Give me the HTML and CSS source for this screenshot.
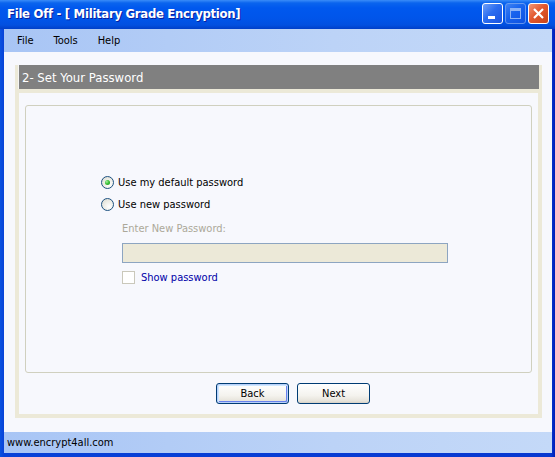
FILE: index.html
```html
<!DOCTYPE html>
<html lang="en">
<head>
    <meta charset="UTF-8">
    <title>File Off - [ Military Grade Encryption]</title>
    <link rel="stylesheet" href="styles.css">
</head>
<body>
    <div class="window">
        <div class="titlebar">
            <span class="title">File Off - [ Military Grade Encryption]</span>
            <div class="title-buttons">
                <span class="tbtn minimize"><i></i></span>
                <span class="tbtn maximize"><i></i></span>
                <span class="tbtn close">
                    <svg width="13" height="13" viewBox="0 0 13 13">
                        <path d="M2 2 L11 11 M11 2 L2 11" stroke="#fff" stroke-width="2.2" fill="none"/>
                    </svg>
                </span>
            </div>
        </div>

        <div class="menubar">
            <span class="menu-item">File</span>
            <span class="menu-item">Tools</span>
            <span class="menu-item">Help</span>
        </div>

        <div class="client">
            <div class="frame">
                <div class="step-header">2- Set Your Password</div>
                <div class="panel">
                    <div class="groupbox">
                        <label class="option">
                            <span class="radio checked"></span>
                            <span>Use my default password</span>
                        </label>
                        <label class="option">
                            <span class="radio"></span>
                            <span>Use new password</span>
                        </label>

                        <div class="new-password">
                            <div class="field-label">Enter New Password:</div>
                            <div class="textbox"></div>
                            <label class="show-password">
                                <span class="checkbox"></span>
                                <span>Show password</span>
                            </label>
                        </div>
                    </div>

                    <div class="actions">
                        <button class="xp-button default">Back</button>
                        <button class="xp-button">Next</button>
                    </div>
                </div>
            </div>
        </div>

        <div class="statusbar">www.encrypt4all.com</div>
    </div>
</body>
</html>
```

FILE: styles.css
```css
body {
    margin: 0;
    padding: 0;
    font-family: "DejaVu Sans Condensed", "DejaVu Sans", sans-serif;
    font-size: 11px;
    color: #000;
}
.window {
    width: 555px;
    height: 457px;
    display: flex;
    flex-direction: column;
    background: linear-gradient(to right, #0A52E0 0, #0842D8 4px, #0838D0 551px, #001DB8 555px);
    overflow: hidden;
}
.titlebar {
    height: 29px;
    flex: none;
    display: flex;
    align-items: center;
    justify-content: space-between;
    padding: 0 6px 0 7px;
    background: linear-gradient(to bottom, #3A8CF8 0, #0A64EE 3px, #0058EE 8px, #0055EA 18px, #0250E0 25px, #003FC8 29px);
}
.title {
    color: #fff;
    font-weight: bold;
    font-size: 13px;
    letter-spacing: -0.3px;
    padding-bottom: 3px;
    text-shadow: 1px 1px 0 #0A1E9E;
}
.title-buttons {
    display: flex;
    gap: 2px;
    padding-bottom: 3px;
}
.tbtn {
    width: 19px;
    height: 19px;
    border: 1px solid #fff;
    border-radius: 3px;
    position: relative;
    display: flex;
    align-items: center;
    justify-content: center;
    background: linear-gradient(135deg, #6FA0F8 0, #2B6DF0 45%, #1A53E0 100%);
}
.minimize i {
    position: absolute;
    left: 5px;
    bottom: 4px;
    width: 7px;
    height: 3px;
    background: #fff;
}
.maximize {
    opacity: 0.55;
    border-color: #B8CCF5;
}
.maximize i {
    width: 9px;
    height: 7px;
    border: 1px solid #fff;
    border-top-width: 3px;
    margin-top: 1px;
}
.close {
    background: linear-gradient(135deg, #F29676 0, #E2582F 45%, #C84418 100%);
}
.menubar {
    height: 23px;
    flex: none;
    margin: 0 3px 0 4px;
    padding-left: 3px;
    display: flex;
    align-items: center;
    background: linear-gradient(to right, #A8C5F5 0, #BCD3F7 60%, #C4D9F8 100%);
}
.menu-item {
    padding: 0 10px;
}
.client {
    flex: 1;
    margin: 0 3px 0 4px;
    padding: 13px 0 0 11px;
    background: #F7F8FD;
}
.frame {
    width: 527px;
    padding: 0 4px 4px;
    background: #ECE9D8;
    box-sizing: border-box;
}
.step-header {
    height: 24px;
    margin: 0 -1px;
    padding-left: 3px;
    display: flex;
    align-items: center;
    background: #808080;
    border-left: 1px solid #F4F4F4;
    color: #fff;
    font-size: 13px;
}
.panel {
    margin-top: 4px;
    padding: 12px 6px 10px;
    background: #F7F8FD;
}
.groupbox {
    height: 268px;
    box-sizing: border-box;
    border: 1px solid #D0D0BF;
    border-radius: 3px;
    padding: 67px 0 0 75px;
}
.option {
    height: 18px;
    display: flex;
    align-items: center;
    gap: 4px;
    margin-bottom: 4px;
}
.radio {
    width: 11px;
    height: 11px;
    border: 1px solid #1C5180;
    border-radius: 50%;
    background: radial-gradient(circle at 65% 70%, #FFFFFF 0, #EDEDE6 50%, #D8D8CE 100%);
    display: flex;
    align-items: center;
    justify-content: center;
}
.radio.checked::after {
    content: "";
    width: 5px;
    height: 5px;
    border-radius: 50%;
    background: radial-gradient(circle at 35% 35%, #A6F0A0 0, #3CC23A 45%, #178C17 100%);
}
.new-password {
    margin-left: 21px;
}
.field-label {
    margin-top: 9px;
    line-height: 14px;
    color: #ACA899;
}
.textbox {
    width: 326px;
    height: 20px;
    box-sizing: border-box;
    margin-top: 7px;
    border: 1px solid #8DA5C1;
    background: #ECE9D8;
}
.show-password {
    height: 16px;
    margin-top: 6px;
    display: flex;
    align-items: center;
    gap: 6px;
    color: #0000A8;
}
.checkbox {
    width: 11px;
    height: 11px;
    border: 1px solid #CAC8BB;
    background: #fff;
}
.actions {
    margin-top: 10px;
    padding-left: 191px;
    display: flex;
    gap: 8px;
}
.xp-button {
    width: 73px;
    height: 21px;
    padding: 0;
    font-family: inherit;
    font-size: 11px;
    color: #000;
    border: 1px solid #003C74;
    border-radius: 3px;
    background: linear-gradient(to bottom, #FFFFFF 0, #F4F3EE 60%, #E6E3DA 90%, #D6D0C5 100%);
}
.xp-button.default {
    box-shadow: inset 0 0 0 1px #B9D1FA, inset 1px 1px 0 1px #CEE7FF, inset -1px -1px 0 1px #6982EE;
}
.statusbar {
    height: 21px;
    flex: none;
    margin: 0 3px 4px 4px;
    padding-left: 3px;
    display: flex;
    align-items: center;
    background: linear-gradient(to right, #A8C5F5 0, #BCD3F7 60%, #C4D9F8 100%);
}
```
